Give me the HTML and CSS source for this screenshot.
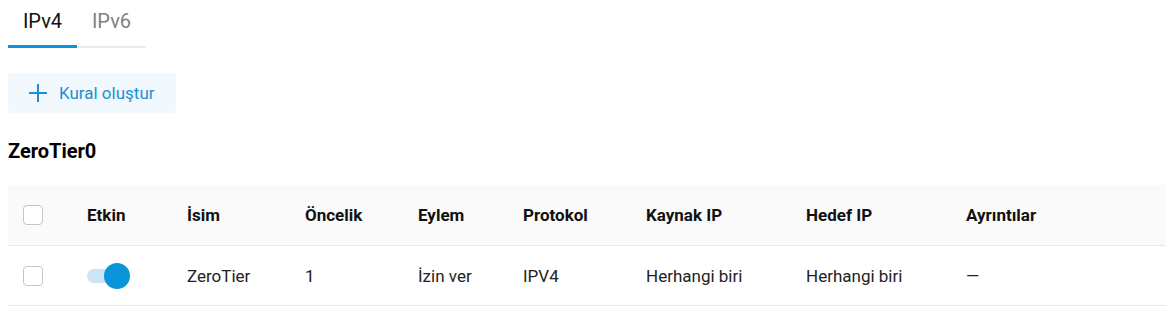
FILE: index.html
```html
<!DOCTYPE html>
<html lang="tr">
<head>
    <meta charset="UTF-8">
    <title>Trafik kuralları</title>
    <link rel="stylesheet" href="styles.css">
</head>
<body>
    <div class="tabs">
        <div class="tab active">IPv4</div>
        <div class="tab">IPv6</div>
    </div>

    <button class="add-button">
        <svg width="20" height="20" viewBox="0 0 20 20"><path d="M10 1v18M1 10h18" stroke="currentColor" stroke-width="2" fill="none"/></svg>
        <span>Kural oluştur</span>
    </button>

    <h2 class="group-title">ZeroTier0</h2>

    <table class="rules">
        <thead>
            <tr>
                <th class="col-check"><span class="checkbox"></span></th>
                <th class="col-enabled">Etkin</th>
                <th class="col-name">İsim</th>
                <th class="col-prio">Öncelik</th>
                <th class="col-action">Eylem</th>
                <th class="col-proto">Protokol</th>
                <th class="col-src">Kaynak IP</th>
                <th class="col-dst">Hedef IP</th>
                <th>Ayrıntılar</th>
            </tr>
        </thead>
        <tbody>
            <tr>
                <td class="col-check"><span class="checkbox"></span></td>
                <td class="col-enabled"><span class="switch on"><span class="knob"></span></span></td>
                <td>ZeroTier</td>
                <td>1</td>
                <td>İzin ver</td>
                <td>IPV4</td>
                <td>Herhangi biri</td>
                <td>Herhangi biri</td>
                <td>—</td>
            </tr>
        </tbody>
    </table>
</body>
</html>
```

FILE: styles.css
```css
body {
    margin: 0;
    padding: 0 10px 0 8px;
    font-family: Roboto, 'Liberation Sans', sans-serif;
    color: #1a1a1a;
    background: #fff;
}
.tabs {
    display: flex;
    width: 138px;
    border-bottom: 2px solid #ebebeb;
    margin-top: 8px;
}
.tab {
    width: 69px;
    text-align: center;
    font-size: 20px;
    line-height: 26px;
    padding-bottom: 11px;
    color: #808080;
    margin-bottom: -2px;
    border-bottom: 3px solid transparent;
}
.tab.active {
    color: #111;
    border-bottom-color: #0a94d9;
}
.add-button {
    display: flex;
    align-items: center;
    gap: 11px;
    margin-top: 25px;
    height: 40px;
    padding: 0 21px 0 20px;
    background: #f2f9fe;
    color: #1b8fd4;
    border: none;
    border-radius: 4px;
    font-family: inherit;
    font-size: 17px;
}
.add-button svg {
    display: block;
}
.group-title {
    font-size: 20px;
    font-weight: bold;
    margin: 26px 0 0;
    line-height: 24px;
    color: #000;
}
.rules {
    width: 100%;
    margin-top: 22px;
    border-collapse: collapse;
    font-size: 17px;
}
.rules th {
    text-align: left;
    font-weight: bold;
    height: 60px;
    background: #fafafa;
    border-bottom: 1px solid #e8e8e8;
    padding: 0;
    color: #111;
}
.rules td {
    height: 59px;
    border-bottom: 1px solid #e8e8e8;
    padding: 0;
    color: #222;
}
.rules .col-check { width: 64px; padding-left: 15px; }
.col-enabled { width: 100px; }
.col-name { width: 118px; }
.col-prio { width: 113px; }
.col-action { width: 105px; }
.col-proto { width: 123px; }
.col-src { width: 160px; }
.col-dst { width: 160px; }
.checkbox {
    display: block;
    width: 18px;
    height: 18px;
    border: 1px solid #c4c4c4;
    border-radius: 4px;
    background: #fff;
}
.switch {
    position: relative;
    display: block;
    width: 40px;
    height: 14px;
    border-radius: 7px;
    background: #c9e5f6;
}
.switch .knob {
    position: absolute;
    top: -6px;
    left: 17px;
    width: 26px;
    height: 26px;
    border-radius: 50%;
    background: #0a94d9;
}
```
